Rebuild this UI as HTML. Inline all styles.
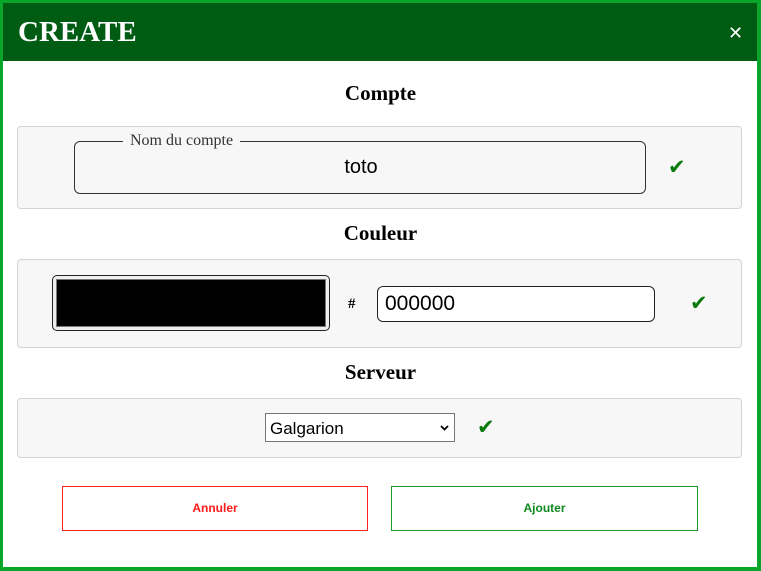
<!DOCTYPE html>
<html><head><meta charset="utf-8">
<style>
*{box-sizing:border-box;margin:0;padding:0}
body{width:761px;height:571px;overflow:hidden;background:#fff;position:relative;font-family:"Liberation Sans",sans-serif}
.frame{position:absolute;left:0;top:0;width:761px;height:571px;border:3px solid #0aa62a;border-right-width:4px;border-bottom-width:4px}
.hdr{position:absolute;left:3px;top:3px;width:754px;height:58px;background:#005c13}
.hdr h1{position:absolute;left:15px;top:13px;font:bold 29px "Liberation Serif",serif;color:#fff}
.x{position:absolute;left:725px;top:21px;color:#fff;font:18px "DejaVu Sans",sans-serif;line-height:20px}
.t{position:absolute;left:0;width:761px;text-align:center;font:bold 21px "Liberation Serif",serif;color:#000}
.panel{position:absolute;left:17px;width:725px;background:#f7f7f7;border:1px solid #d4d4d4;border-radius:4px}
.chk{position:absolute;color:#0a7a0a;font:bold 21px "DejaVu Sans",sans-serif}
.btn{position:absolute;top:486px;height:45px;background:#fff;font:bold 12px "Liberation Sans",sans-serif;text-align:center;line-height:43px}
</style></head><body>
<div class="frame"></div>
<div class="hdr"><h1>CREATE</h1><div class="x">✕</div></div>
<div class="t" style="top:81px">Compte</div>
<div class="panel" style="top:126px;height:83px"></div>
<div style="position:absolute;left:74px;top:141px;width:572px;height:53px;border:1px solid #333;border-radius:6px"></div>
<div style="position:absolute;left:123px;top:132px;padding:0 7px;background:#f7f7f7;font:16px 'Liberation Serif',serif;color:#333">Nom du compte</div>
<div style="position:absolute;left:75px;top:156px;width:572px;text-align:center;font:20px 'Liberation Sans',sans-serif;color:#000">toto</div>
<div class="chk" style="left:668px;top:155px">✔</div>
<div class="t" style="top:221px">Couleur</div>
<div class="panel" style="top:259px;height:89px"></div>
<div style="position:absolute;left:52px;top:275px;width:278px;height:56px;border:1px solid #222;border-radius:5px;background:#eee;padding:3px"><div style="width:100%;height:100%;background:#000;border:1px solid #777"></div></div>
<div style="position:absolute;left:348px;top:296px;font:bold 15px 'Liberation Serif',serif">#</div>
<div style="position:absolute;left:377px;top:286px;width:278px;height:36px;background:#fff;border:1px solid #222;border-radius:6px;font:21px 'Liberation Sans',sans-serif;padding:5px 0 0 7px">000000</div>
<div class="chk" style="left:690px;top:291px">✔</div>
<div class="t" style="top:360px">Serveur</div>
<div class="panel" style="top:398px;height:60px"></div>
<div style="position:absolute;left:265px;top:413px;width:190px;height:29px;background:#fff;border:1px solid #767676;font:17px 'Liberation Sans',sans-serif;padding:5px 0 0 4px">Galgarion<svg style="position:absolute;right:5px;top:11px" width="9" height="6" viewBox="0 0 9 6"><path d="M1 1L4.5 4.5L8 1" fill="none" stroke="#000" stroke-width="1.8"/></svg></div>
<div class="chk" style="left:477px;top:415px">✔</div>
<div class="btn" style="left:62px;width:306px;border:1px solid #ff2020;color:#ff1a1a">Annuler</div>
<div class="btn" style="left:391px;width:307px;border:1px solid #1e9a2a;color:#0f8a1f">Ajouter</div>
</body></html>
